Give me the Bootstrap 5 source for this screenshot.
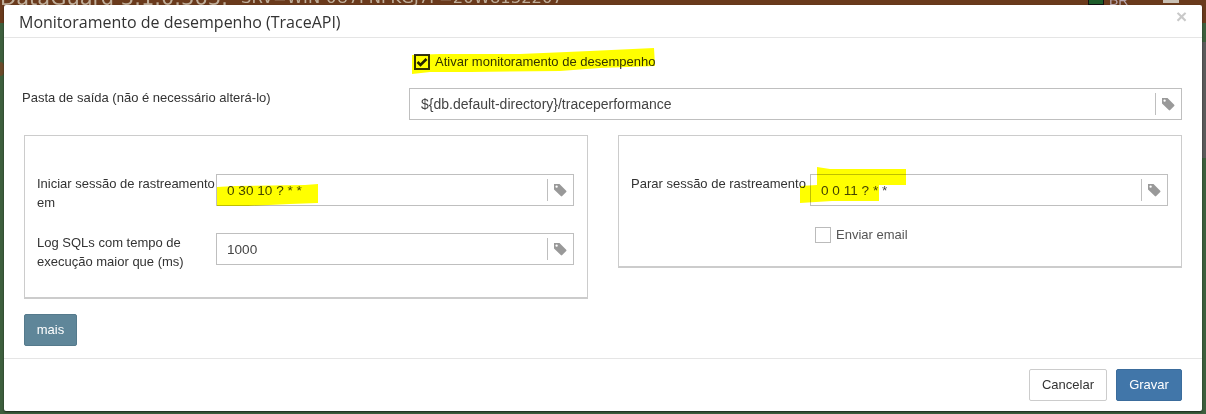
<!DOCTYPE html>
<html lang="pt-BR">
<head>
<meta charset="utf-8">
<title>Monitoramento de desempenho</title>
<link href="https://cdn.jsdelivr.net/npm/bootstrap@5.3.0/dist/css/bootstrap.min.css" rel="stylesheet">
<style>
html,body{margin:0;height:414px;overflow:hidden;background:#3d5f3d;font-family:"Liberation Sans",Arial,sans-serif;color:#333}
.topstrip{height:23px;background:#6a3a1c;overflow:hidden;color:#bfae9a;font-family:"DejaVu Sans",sans-serif;white-space:pre;margin:0;display:flex;align-items:flex-start}
.topstrip-app{font-size:21px;line-height:20px;margin-top:-12px;width:241px;flex:none}
.topstrip-srv{font-size:16.4px;line-height:20px;margin-top:-12px}
.flagmark{position:absolute;left:1088px;top:0;width:16px;height:5px;background:#1d5c2a;border:1px solid #111;border-top:0}
.langmark{position:absolute;left:1109px;top:-8px;font-size:14px;line-height:16px;color:#b7a6ae}
.barmark{position:absolute;left:1163px;top:0;width:16px;height:3px;background:#c9c0b4}
.graystrip{position:absolute;right:0;top:42px;width:4px;height:116px;background:#5b5b5b}
.sheet{position:absolute;left:4px;top:5px;width:1198px;height:406px;background:#fff;border:0;border-radius:2px;box-shadow:0 1px 2px rgba(0,0,0,.6)}
.sheet-head{height:33px;border-bottom:1px solid #e5e5e5;padding-left:15px;display:flex;justify-content:space-between;align-items:flex-start}
.sheet-title{font-family:"Open Sans",sans-serif;font-size:16px;line-height:34px;color:#333;margin:0;font-weight:400}
.shut{font-family:"Liberation Sans",sans-serif;font-weight:700;font-size:19px;line-height:24px;color:#c9c9c9;background:none;border:0;padding:0 15px 0 0}
.sheet-main{height:321px;padding:16px 20px 0;border-bottom:1px solid #e5e5e5}
.tick-row{height:16px;margin-left:390px;font-size:13px;line-height:14px}
.tick{width:16px;height:16px;border:1px solid #bbb;flex:none;background:#fff;display:block}
.tick svg{display:block}
.tick.on{border:2px solid #333}
.tick-text{margin-left:5px}
.path-row{margin-top:18px;height:32px}
.path-label{width:387px;margin-left:-2px;flex:none;font-size:13px;line-height:19px}
.field{height:32px;flex:1 1 auto;border:1px solid #bfbfbf;display:flex;align-items:center;background:#fff;min-width:0;font-size:13.6px;color:#444}
.path-row .field{font-size:14px}
.path-row .field-value{padding-left:11px;padding-top:0}
.field-value{flex:1 1 auto;padding-left:10px;padding-top:1px;line-height:18px}
.field-tag{flex:none;width:26px;height:22px;border-left:1px solid #bfbfbf;padding-left:5px;display:flex;align-items:center}
.panes{margin-top:15px;gap:30px}
.pane{width:564px;flex:none;border:1px solid #ccc;border-bottom-width:2px;padding:38px 13px 0 12px}
.pane-left{height:164px}
.pane-right{height:133px}
.pane-label{width:179px;flex:none;font-size:13px;line-height:19px;color:#333}
.pane-row{height:32px}
.pane-row+.pane-row{margin-top:27px}
.mail-row{margin-top:21px;margin-left:184px;font-size:13px;color:#555;line-height:15px}
.mail-row .tick-text{margin-top:-2px}
.more{display:block;margin-top:15px;width:53px;height:32px;background:#5f8699;border:1px solid #557a8c;border-radius:2px;color:#fff;font-size:13px;padding:0}
.sheet-foot{height:51px;padding:10px 20px;gap:9px}
.act{height:32px;font-size:13px;border-radius:2px;padding:0;line-height:30px}
.act-cancel{width:78px;background:#fff;border:1px solid #ccc;color:#333}
.act-save{width:66px;background:#4176a9;border:1px solid #3b6c9c;color:#fff}
.marker{position:absolute;left:0;top:0;width:1206px;height:414px;mix-blend-mode:multiply;pointer-events:none}
.leftbit{position:absolute;left:0;top:62px;width:4px;height:14px;background:#6a4a2a;border-radius:0 6px 6px 0}
</style>
</head>
<body>
<div class="topstrip"><span class="topstrip-app">DataGuard 3.1.0.363:</span><span class="topstrip-srv">SRV=WIN-0U7PNFKGJ7P=20W8132207</span></div>
<div class="flagmark"></div>
<div class="langmark">BR</div>
<div class="barmark"></div>
<div class="graystrip"></div>
<div class="leftbit"></div>

<div class="sheet modal-content">
  <div class="sheet-head">
    <h5 class="sheet-title">Monitoramento de desempenho (TraceAPI)</h5>
    <button class="shut" type="button">×</button>
  </div>
  <div class="sheet-main">
    <div class="tick-row d-flex align-items-center">
      <span class="tick on"><svg width="12" height="12" viewBox="0 0 12 12"><path d="M1.5 6 4.5 9 10.5 3" fill="none" stroke="#222" stroke-width="2.6"/></svg></span>
      <span class="tick-text">Ativar monitoramento de desempenho</span>
    </div>
    <div class="path-row d-flex">
      <div class="path-label">Pasta de saída (não é necessário alterá-lo)</div>
      <div class="field">
        <div class="field-value">${db.default-directory}/traceperformance</div>
        <div class="field-tag"><svg width="14" height="14" viewBox="0 0 14 14"><path fill="#999" d="M1 1h5.5l6.7 6.7a1 1 0 0 1 0 1.4l-4 4a1 1 0 0 1-1.4 0L1 6.5Zm2.6 1.4a1.2 1.2 0 1 0 0 2.4 1.2 1.2 0 0 0 0-2.4Z"/></svg></div>
      </div>
    </div>
    <div class="panes d-flex align-items-start">
      <div class="pane pane-left">
        <div class="pane-row d-flex">
          <div class="pane-label">Iniciar sessão de rastreamento em</div>
          <div class="field">
            <div class="field-value">0 30 10 ? * *</div>
            <div class="field-tag"><svg width="14" height="14" viewBox="0 0 14 14"><path fill="#999" d="M1 1h5.5l6.7 6.7a1 1 0 0 1 0 1.4l-4 4a1 1 0 0 1-1.4 0L1 6.5Zm2.6 1.4a1.2 1.2 0 1 0 0 2.4 1.2 1.2 0 0 0 0-2.4Z"/></svg></div>
          </div>
        </div>
        <div class="pane-row d-flex">
          <div class="pane-label">Log SQLs com tempo de execução maior que (ms)</div>
          <div class="field">
            <div class="field-value">1000</div>
            <div class="field-tag"><svg width="14" height="14" viewBox="0 0 14 14"><path fill="#999" d="M1 1h5.5l6.7 6.7a1 1 0 0 1 0 1.4l-4 4a1 1 0 0 1-1.4 0L1 6.5Zm2.6 1.4a1.2 1.2 0 1 0 0 2.4 1.2 1.2 0 0 0 0-2.4Z"/></svg></div>
          </div>
        </div>
      </div>
      <div class="pane pane-right">
        <div class="pane-row d-flex">
          <div class="pane-label">Parar sessão de rastreamento</div>
          <div class="field">
            <div class="field-value">0 0 11 ? * *</div>
            <div class="field-tag"><svg width="14" height="14" viewBox="0 0 14 14"><path fill="#999" d="M1 1h5.5l6.7 6.7a1 1 0 0 1 0 1.4l-4 4a1 1 0 0 1-1.4 0L1 6.5Zm2.6 1.4a1.2 1.2 0 1 0 0 2.4 1.2 1.2 0 0 0 0-2.4Z"/></svg></div>
          </div>
        </div>
        <div class="mail-row d-flex align-items-center">
          <span class="tick"></span>
          <span class="tick-text">Enviar email</span>
        </div>
      </div>
    </div>
    <button class="more btn" type="button">mais</button>
  </div>
  <div class="sheet-foot d-flex justify-content-end">
    <button class="act act-cancel btn" type="button">Cancelar</button>
    <button class="act act-save btn" type="button">Gravar</button>
  </div>
</div>

<svg class="marker" viewBox="0 0 1206 414">
  <path fill="#ffff00" d="M412 55 440 54 520 54 590 51 654 48 655 66 600 68 560 71 470 72 430 72 412 74Z"/>
  <path fill="#ffff00" d="M217 187 235 186 305 185 318 184 318 203 290 204 248 206 217 206Z"/>
  <path fill="#ffff00" d="M817 167 830 169 906 169 906 185 879 185 879 201 832 201 800 203 800 186 817 185Z"/>
</svg>
<script src="https://cdn.jsdelivr.net/npm/bootstrap@5.3.0/dist/js/bootstrap.bundle.min.js"></script>
</body>
</html>
